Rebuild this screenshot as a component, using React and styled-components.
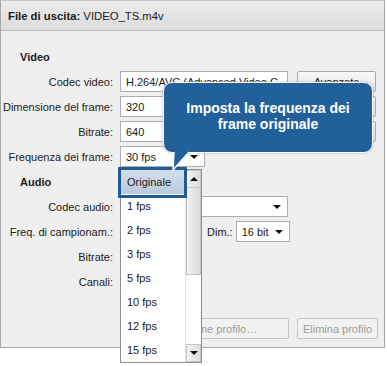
import React from "react";
import styled, { createGlobalStyle } from "styled-components";

const Global = createGlobalStyle`
  html, body { margin: 0; padding: 0; background: #ffffff; }
  body { font-family: "Liberation Sans", Arial, sans-serif; font-size: 11px; color: #1b1b1b; }
  * { box-sizing: border-box; }
`;

const Page = styled.div`
  width: 387px;
  height: 366px;
  background: #ffffff;
`;

const Window = styled.div`
  position: relative;
  width: 385px;
  height: 348px;
  border: 1px solid #a6a6a6;
  border-top-color: #c9c9c9;
  background: #efefef;
  display: flex;
  flex-direction: column;
`;

const Header = styled.div`
  height: 30px;
  flex: none;
  border-bottom: 1px solid #b9b9b9;
  background: linear-gradient(#ececec, #dcdcdc);
  display: flex;
  align-items: center;
  padding-left: 7px;
  white-space: pre;
  font-size: 11.3px;
`;

const Bold = styled.span`
  font-weight: bold;
`;

const Body = styled.div`
  padding-top: 13px;
  display: flex;
  flex-direction: column;
`;

const Heading = styled.div`
  height: 25px;
  display: flex;
  align-items: center;
  padding-left: 19px;
  font-weight: bold;
`;

const Row = styled.div`
  height: 25px;
  display: grid;
  grid-template-columns: 112px 1fr;
  column-gap: 7px;
  align-items: center;
`;

const Label = styled.div`
  text-align: right;
  white-space: nowrap;
`;

const Controls = styled.div`
  display: flex;
  align-items: center;
  gap: ${(p) => p.$gap ?? 9}px;
`;

const Input = styled.div`
  width: ${(p) => p.$w}px;
  height: 21px;
  border: 1px solid #abadb3;
  background: #ffffff;
  display: flex;
  align-items: center;
  padding-left: 5px;
  white-space: nowrap;
  overflow: hidden;
`;

const Select = styled(Input)`
  position: relative;
  padding-right: 18px;
  &::after {
    content: "";
    position: absolute;
    right: 6px;
    top: 8px;
    border-left: 4px solid transparent;
    border-right: 4px solid transparent;
    border-top: 4px solid #111;
  }
`;

const Button = styled.div`
  width: ${(p) => p.$w}px;
  height: 21px;
  border: 1px solid ${(p) => (p.$disabled ? "#c4c4c4" : "#a9a9a9")};
  border-radius: 2px;
  background: ${(p) => (p.$disabled ? "#f1f1f1" : "linear-gradient(#f8f8f8, #e4e4e4)")};
  color: ${(p) => (p.$disabled ? "#9c9c9c" : "#1b1b1b")};
  display: flex;
  align-items: center;
  justify-content: center;
  white-space: nowrap;
  overflow: hidden;
`;

const SmallLabel = styled.span`
  margin-left: 7px;
  margin-right: 3px;
  white-space: nowrap;
`;

const Footer = styled.div`
  margin-top: 24px;
  display: flex;
  justify-content: flex-end;
  gap: 8px;
  padding-right: 6px;
`;

const List = styled.div`
  position: absolute;
  left: 119px;
  top: 168px;
  width: 82px;
  height: 194px;
  border: 1px solid #8e8e8e;
  background: #ffffff;
  display: flex;
`;

const Items = styled.div`
  flex: 1;
  display: flex;
  flex-direction: column;
`;

const Item = styled.div`
  height: 24px;
  display: flex;
  align-items: center;
  padding-left: 6px;
  margin-right: 1px;
  background: ${(p) => (p.$active ? "linear-gradient(#d3deeb, #b9cade)" : "transparent")};
  white-space: nowrap;
`;

const Scrollbar = styled.div`
  width: 16px;
  display: flex;
  flex-direction: column;
  background: #ffffff;
  border-left: 1px solid #e2e2e2;
`;

const ScrollBtn = styled.div`
  height: 18px;
  flex: none;
  background: linear-gradient(90deg, #f4f4f4, #dcdcdc);
  border: 1px solid #c8c8c8;
  display: flex;
  align-items: center;
  justify-content: center;
  &::after {
    content: "";
    border-left: 4px solid transparent;
    border-right: 4px solid transparent;
    ${(p) => (p.$up ? "border-bottom: 4px solid #111;" : "border-top: 4px solid #111;")}
  }
`;

const Thumb = styled.div`
  height: 87px;
  flex: none;
  background: linear-gradient(90deg, #f3f3f3, #dadada);
  border: 1px solid #c4c4c4;
  border-top: none;
`;

const Track = styled.div`
  flex: 1;
`;

const Focus = styled.div`
  position: absolute;
  left: 117px;
  top: 166px;
  width: 69px;
  height: 31px;
  border: 3px solid #1e5b97;
  pointer-events: none;
`;

const Bubble = styled.div`
  position: absolute;
  left: 162px;
  top: 81px;
  width: 210px;
  height: 71px;
  background: #22609c;
  border: 1.5px solid #ffffff;
  border-radius: 9px;
  box-shadow: 0 0 2px rgba(0, 0, 0, 0.35);
  color: #ffffff;
  font-weight: bold;
  font-size: 14px;
  line-height: 16px;
  display: flex;
  align-items: center;
  justify-content: center;
  text-align: center;
  padding-bottom: 3px;
`;

const Tail = styled.svg`
  position: absolute;
  left: 166px;
  top: 149px;
  overflow: visible;
`;

const items = ["Originale", "1 fps", "2 fps", "3 fps", "5 fps", "10 fps", "12 fps", "15 fps"];

export default function App() {
  return (
    <Page>
      <Global />
      <Window>
        <Header>
          <Bold>File di uscita:</Bold> VIDEO_TS.m4v
        </Header>
        <Body>
          <Heading>Video</Heading>
          <Row>
            <Label>Codec video:</Label>
            <Controls>
              <Input $w={168}>H.264/AVC (Advanced Video C</Input>
              <Button $w={79}>Avanzate</Button>
            </Controls>
          </Row>
          <Row>
            <Label>Dimensione del frame:</Label>
            <Controls>
              <Input $w={168}>320</Input>
              <Button $w={79} />
            </Controls>
          </Row>
          <Row>
            <Label>Bitrate:</Label>
            <Controls>
              <Input $w={168}>640</Input>
              <Button $w={79} />
            </Controls>
          </Row>
          <Row>
            <Label>Frequenza dei frame:</Label>
            <Controls>
              <Select $w={85}>30 fps</Select>
            </Controls>
          </Row>
          <Heading>Audio</Heading>
          <Row>
            <Label>Codec audio:</Label>
            <Controls>
              <Select $w={168} />
            </Controls>
          </Row>
          <Row>
            <Label>Freq. di campionam.:</Label>
            <Controls $gap={0}>
              <Select $w={80} />
              <SmallLabel>Dim.:</SmallLabel>
              <Select $w={54}>16 bit</Select>
            </Controls>
          </Row>
          <Row>
            <Label>Bitrate:</Label>
            <Controls>
              <Select $w={78} />
            </Controls>
          </Row>
          <Row>
            <Label>Canali:</Label>
            <Controls>
              <Select $w={78} />
            </Controls>
          </Row>
          <Footer>
            <Button $w={165} $disabled>Salva come profilo…</Button>
            <Button $w={81} $disabled>Elimina profilo</Button>
          </Footer>
        </Body>

        <List>
          <Items>
            {items.map((t, i) => (
              <Item key={t} $active={i === 0}>{t}</Item>
            ))}
          </Items>
          <Scrollbar>
            <ScrollBtn $up />
            <Thumb />
            <Track />
            <ScrollBtn />
          </Scrollbar>
        </List>
        <Focus />

        <Bubble>
          Imposta la frequenza dei
          <br />
          frame originale
        </Bubble>
        <Tail width="26" height="22" viewBox="0 0 26 22">
          <path d="M7 0 L6 20 L24 0" fill="#22609c" />
          <path d="M7 2 L6 20 L22 2" fill="none" stroke="#ffffff" strokeWidth="1.5" strokeLinejoin="round" />
          <path d="M8.5 0 L8.5 3 L20 3 L22 0 Z" fill="#22609c" />
        </Tail>
      </Window>
    </Page>
  );
}
